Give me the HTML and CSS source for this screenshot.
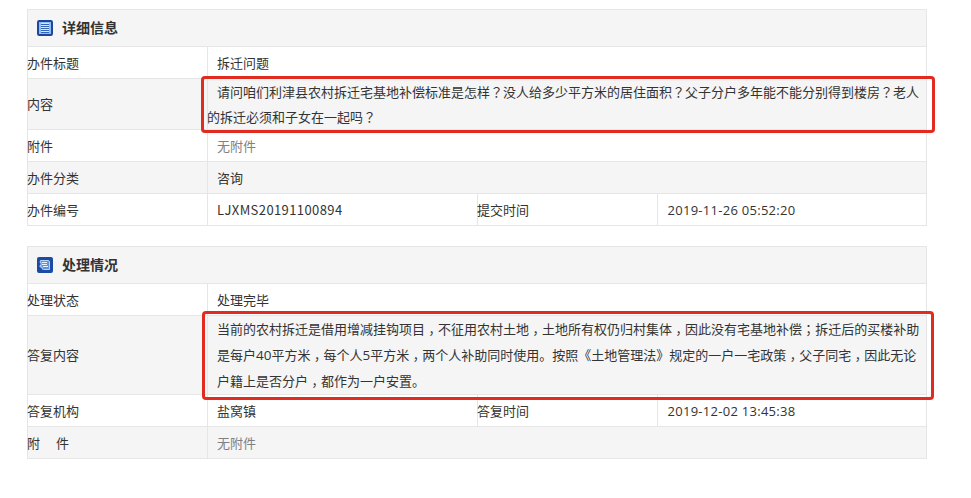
FILE: index.html
```html
<!DOCTYPE html>
<html lang="zh-CN">
<head>
    <meta charset="UTF-8">
    <title>详细信息</title>
    <link rel="stylesheet" href="styles.css">
</head>
<body>
    <div class="container">
        <table class="info-table">
            <colgroup>
                <col class="col-label"><col class="col-value"><col class="col-label"><col>
            </colgroup>
            <tr class="title-row">
                <th colspan="4">
                    <div class="title">
                        <svg class="icon" width="16" height="16" viewBox="0 0 16 16">
                            <rect x="1" y="1" width="14" height="14" rx="1.2" fill="#8fbcf5" stroke="#1d479b" stroke-width="2"/>
                            <path d="M4 3.500h8M4 5.500h8M4 7.500h8M4 9.500h8M4 11.500h8" stroke="#d4e7ff"/>
                            <path d="M4 4.500h8M4 6.500h8M4 8.500h8M4 10.500h8M4 12.500h8" stroke="#3564b5"/>
                        </svg>
                        <span>详细信息</span>
                    </div>
                </th>
            </tr>
            <tr>
                <td>办件标题</td>
                <td class="value" colspan="3">拆迁问题</td>
            </tr>
            <tr class="even question-row">
                <td>内容</td>
                <td class="content" colspan="3">
                    <div class="question">请问咱们利津县农村拆迁宅基地补偿标准是怎样<span class="mid">？</span>没人给多少平方米的居住面积<span class="mid">？</span>父子分户多年能不能分别得到楼房<span class="mid">？</span>老人<br>的拆迁必须和子女在一起吗<span class="mid">？</span></div>
                    <div class="mark mark-question"></div>
                </td>
            </tr>
            <tr>
                <td>附件</td>
                <td class="value none" colspan="3">无附件</td>
            </tr>
            <tr class="even">
                <td>办件分类</td>
                <td class="value" colspan="3">咨询</td>
            </tr>
            <tr>
                <td>办件编号</td>
                <td class="value code">LJXMS20191100894</td>
                <td>提交时间</td>
                <td class="value date">2019-11-26 05:52:20</td>
            </tr>
        </table>

        <table class="info-table">
            <colgroup>
                <col class="col-label"><col class="col-value"><col class="col-label"><col>
            </colgroup>
            <tr class="title-row">
                <th colspan="4">
                    <div class="title">
                        <svg class="icon" width="16" height="16" viewBox="0 0 16 16">
                            <rect width="16" height="16" rx="2" fill="#1c4ba5"/>
                            <path d="M3.500 3.500h7.500q1.500 0 1.500 1.500v7.500h-6q-1.500 0-1.500-1.500V10H3V8.500h1V5.500H3z" fill="#5f93e0" stroke="#b5d3fb"/>
                            <path d="M5 5.500h5M5 7.500h5M6 9.500h5" stroke="#e6f1ff"/>
                        </svg>
                        <span>处理情况</span>
                    </div>
                </th>
            </tr>
            <tr>
                <td>处理状态</td>
                <td class="value" colspan="3">处理完毕</td>
            </tr>
            <tr class="even answer-row">
                <td>答复内容</td>
                <td class="content" colspan="3">
                    <div class="answer">当前的农村拆迁是借用增减挂钩项目<span class="mid low">，</span>不征用农村土地<span class="mid low">，</span>土地所有权仍归村集体<span class="mid low">，</span>因此没有宅基地补偿<span class="mid">；</span>拆迁后的买楼补助<br>是每户<span class="num">40</span>平方米<span class="mid low">，</span>每个人<span class="num">5</span>平方米<span class="mid low">，</span>两个人补助同时使用。按照《土地管理法》规定的一户一宅政策<span class="mid low">，</span>父子同宅<span class="mid low">，</span>因此无论<br>户籍上是否分户<span class="mid low">，</span>都作为一户安置。</div>
                    <div class="mark mark-answer"></div>
                </td>
            </tr>
            <tr>
                <td>答复机构</td>
                <td class="value">盐窝镇</td>
                <td>答复时间</td>
                <td class="value date">2019-12-02 13:45:38</td>
            </tr>
            <tr class="even">
                <td><span class="spaced">附</span>件</td>
                <td class="value none" colspan="3">无附件</td>
            </tr>
        </table>
    </div>
</body>
</html>
```

FILE: styles.css
```css
body {
    margin: 0;
    background: #fff;
    color: #333;
    font-family: "Open Sans", "Noto Sans CJK SC", sans-serif;
    font-size: 13px;
    line-height: 20px;
}

.container {
    width: 900px;
    padding: 9px 0 0 27px;
}

.info-table {
    width: 900px;
    margin-bottom: 20px;
    table-layout: fixed;
    border-collapse: collapse;
}

.col-label {
    width: 180px;
}

.col-value {
    width: 270px;
}

tr {
    height: 32px;
}

th, td {
    padding: 0;
    border: 1px solid #e6e6e6;
    text-align: left;
    text-indent: -1px;
    white-space: nowrap;
}

.title-row {
    height: 37px;
}

.title-row,
.even {
    background: #f5f5f5;
}

.title {
    display: flex;
    align-items: center;
    gap: 10px;
    padding-left: 9px;
    font-size: 14px;
}

.value {
    padding-left: 10px;
}

.none {
    color: #808080;
}

.code {
    font-family: "Noto Sans CJK SC", sans-serif;
    letter-spacing: 0.4px;
}

.date {
    padding-left: 10.5px;
    letter-spacing: 0.28px;
}

.num {
    font-size: 13.5px;
}

/* centered full-width punctuation */
.mid {
    font-family: "Noto Sans CJK TC", sans-serif;
    font-feature-settings: "locl" 0;
    line-height: 1;
}

.low {
    vertical-align: -4px;
}

.spaced {
    margin-right: 16px;
}

.question-row {
    height: 51px;
}

.answer-row {
    height: 79px;
}

.content {
    position: relative;
}

.question {
    margin: 0 0 -1px -1px;
    padding-top: 1px;
    line-height: 25px;
    text-indent: 10px;
}

.answer {
    padding-left: 9px;
    line-height: 26px;
    text-indent: 0;
}

/* red highlight frames drawn over the table */
.mark {
    position: absolute;
    box-sizing: border-box;
    border: 3px solid #e12b20;
    border-radius: 4px;
}

.mark-question {
    left: -7px;
    top: -3px;
    width: 734px;
    height: 57px;
}

.mark-answer {
    left: -6px;
    top: -5px;
    width: 732px;
    height: 89px;
}
```
